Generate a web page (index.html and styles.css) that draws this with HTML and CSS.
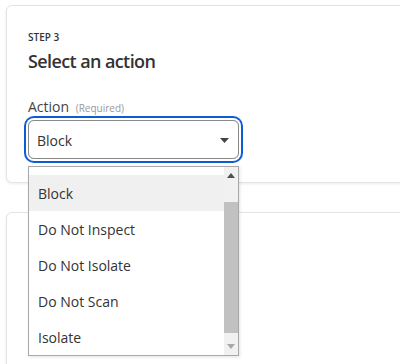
FILE: index.html
```html
<!DOCTYPE html>
<html>
<head>
<meta charset="utf-8">
<link rel="stylesheet" href="styles.css">
</head>
<body>
<div class="page">
  <section class="card card-step">
    <div class="step">STEP 3</div>
    <h2 class="title">Select an action</h2>
    <label class="field-label">Action <span class="req">(Required)</span></label>
    <div class="select-wrap">
      <div class="select">
        <span class="select-value">Block</span>
        <svg class="caret" width="9" height="5" viewBox="0 0 9 5"><path d="M0 0 L9 0 L4.5 5 Z" fill="#444"/></svg>
      </div>
      <div class="listbox">
        <ul class="options">
          <li class="option active">Block</li>
          <li class="option">Do Not Inspect</li>
          <li class="option">Do Not Isolate</li>
          <li class="option">Do Not Scan</li>
          <li class="option">Isolate</li>
        </ul>
        <div class="scrollbar">
          <div class="sb-btn">
            <svg width="8" height="5" viewBox="0 0 8 5"><path d="M0 5 L8 5 L4 0 Z" fill="#505050"/></svg>
          </div>
          <div class="sb-track"><div class="sb-thumb"></div></div>
          <div class="sb-btn">
            <svg width="8" height="5" viewBox="0 0 8 5"><path d="M0 0 L8 0 L4 5 Z" fill="#a8a8a8"/></svg>
          </div>
        </div>
      </div>
    </div>
  </section>
  <section class="card card-next"></section>
</div>
</body>
</html>
```
FILE: styles.css
```css
* { box-sizing: border-box; }
html, body { margin: 0; padding: 0; background: #fff; }
body {
  font-family: "Segoe UI", "Open Sans", "Noto Sans", sans-serif;
  color: #333;
  overflow: hidden;
  width: 400px;
  height: 364px;
}
.page {
  padding: 5px 0 0 6px;
  display: flex;
  flex-direction: column;
  gap: 29px;
  width: 420px;
  height: 364px;
  overflow: hidden;
}
.card {
  background: #fff;
  border: 1px solid #e4e4e4;
  border-radius: 6px;
  box-shadow: 0 1px 3px rgba(0,0,0,0.08);
}
.card-step {
  height: 178px;
  flex-shrink: 0;
  padding: 25px 0 0 21px;
  position: relative;
  z-index: 2;
}
.card-next { height: 160px; flex-shrink: 0; }
.step {
  font-size: 10px;
  font-weight: 600;
  line-height: 12px;
  color: #333;
}
.title {
  margin: 6px 0 0;
  font-size: 18px;
  font-weight: 600;
  line-height: 24px;
  color: #333;
  letter-spacing: -0.6px;
}
.field-label {
  display: block;
  margin-top: 25px;
  font-size: 14px;
  line-height: 18px;
  color: #444;
}
.req {
  font-size: 10px;
  color: #999;
  margin-left: 3px;
}
.select-wrap {
  position: relative;
  margin-top: 3px;
  width: 211px;
}
.select {
  height: 39px;
  border: 1px solid #8a8a8a;
  border-radius: 6px;
  box-shadow: 0 0 0 2px #fff, 0 0 0 4px #0b5cd5;
  display: flex;
  align-items: center;
  justify-content: space-between;
  padding: 2px 9px 0 8px;
  font-size: 14px;
  color: #333;
}
.caret { display: block; }
.listbox {
  position: absolute;
  left: 0;
  top: 46px;
  width: 211px;
  height: 190px;
  border: 1px solid #a9a9a9;
  background: #fff;
  display: flex;
  box-shadow: 1px 1px 3px rgba(0,0,0,0.12);
}
.options {
  list-style: none;
  margin: 0;
  padding: 8px 0 0;
  flex: 1;
}
.option {
  height: 36px;
  display: flex;
  align-items: center;
  padding-left: 9px;
  font-size: 14px;
  color: #333;
}
.option.active { background: #f0f0f0; }
.scrollbar {
  width: 14px;
  background: #f1f1f1;
  display: flex;
  flex-direction: column;
}
.sb-btn {
  height: 17px;
  display: flex;
  align-items: center;
  justify-content: center;
}
.sb-track {
  flex: 1;
  display: flex;
  flex-direction: column;
  padding: 18px 0 5px;
}
.sb-thumb {
  flex: 1;
  background: #c1c1c1;
}
```
